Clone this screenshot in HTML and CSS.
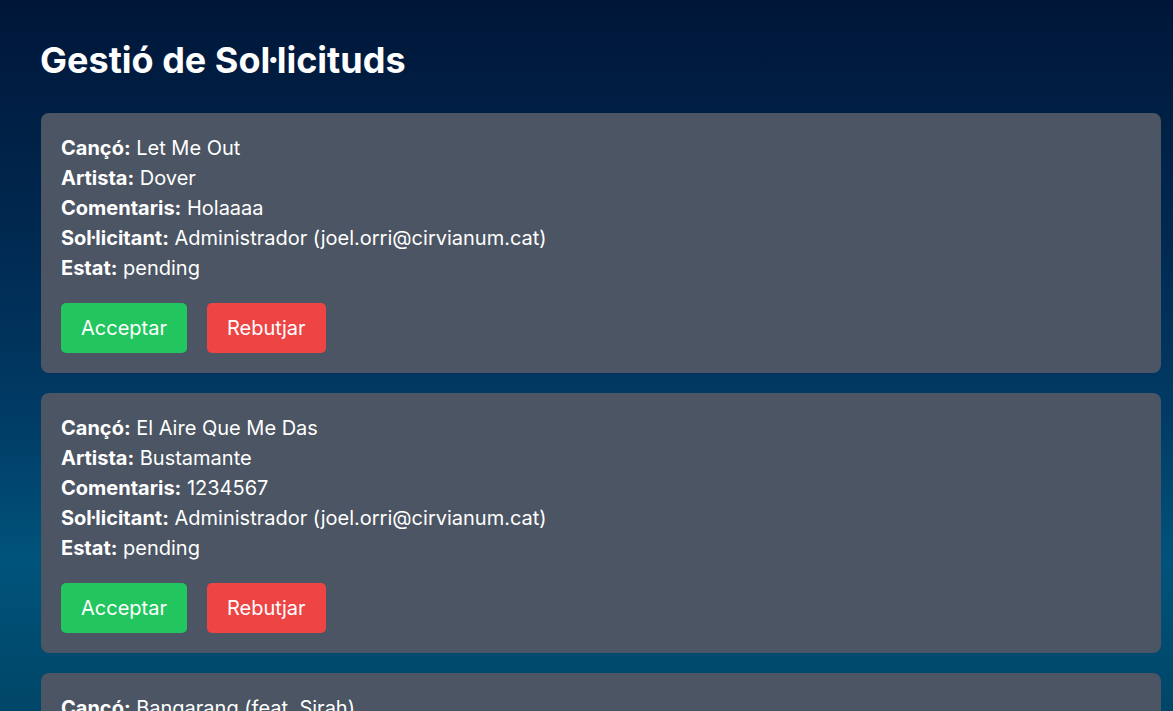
FILE: index.html
```html
<!DOCTYPE html>
<html lang="ca">
<head>
<meta charset="utf-8">
<title>Gestió de Sol·licituds</title>
<link rel="stylesheet" href="styles.css">
</head>
<body>
<main class="page">
  <h1 class="title">Gestió de Sol·licituds</h1>
  <div class="list">
    <section class="card">
      <p><strong>Cançó:</strong> Let Me Out</p>
      <p><strong>Artista:</strong> Dover</p>
      <p><strong>Comentaris:</strong> Holaaaa</p>
      <p><strong>Sol·licitant:</strong> Administrador (joel.orri@cirvianum.cat)</p>
      <p><strong>Estat:</strong> pending</p>
      <div class="actions">
        <button class="btn accept">Acceptar</button>
        <button class="btn reject">Rebutjar</button>
      </div>
    </section>
    <section class="card">
      <p><strong>Cançó:</strong> El Aire Que Me Das</p>
      <p><strong>Artista:</strong> Bustamante</p>
      <p><strong>Comentaris:</strong> 1234567</p>
      <p><strong>Sol·licitant:</strong> Administrador (joel.orri@cirvianum.cat)</p>
      <p><strong>Estat:</strong> pending</p>
      <div class="actions">
        <button class="btn accept">Acceptar</button>
        <button class="btn reject">Rebutjar</button>
      </div>
    </section>
    <section class="card">
      <p><strong>Cançó:</strong> Bangarang (feat. Sirah)</p>
      <p><strong>Artista:</strong> Skrillex</p>
      <p><strong>Comentaris:</strong> -</p>
      <p><strong>Sol·licitant:</strong> Administrador (joel.orri@cirvianum.cat)</p>
      <p><strong>Estat:</strong> pending</p>
      <div class="actions">
        <button class="btn accept">Acceptar</button>
        <button class="btn reject">Rebutjar</button>
      </div>
    </section>
  </div>
</main>
</body>
</html>
```
FILE: styles.css
```css
html, body {
  margin: 0;
  padding: 0;
}
body {
  min-height: 100vh;
  font-family: Inter, "Noto Sans", sans-serif;
  color: #ffffff;
  background: linear-gradient(to bottom, #001638 0px, #002a52 250px, #003c66 420px, #00537b 560px, #004668 711px, #003a58 900px);
  background-attachment: fixed;
}
.page {
  padding: 40px 0 40px 40px;
}
.title {
  margin: 0 0 33px 0;
  font-size: 36px;
  line-height: 40px;
  font-weight: 700;
}
.list {
  display: flex;
  flex-direction: column;
  gap: 20px;
  width: 1120px;
  margin-left: 1px;
}
.card {
  background: #4b5563;
  border-radius: 8px;
  padding: 20px;
}
.card p {
  margin: 0;
  font-size: 20px;
  line-height: 30px;
}
.card strong {
  font-weight: 700;
}
.actions {
  display: flex;
  gap: 20px;
  margin-top: 20px;
}
.btn {
  font-family: Inter, "Noto Sans", sans-serif;
  font-size: 20px;
  line-height: 30px;
  color: #ffffff;
  border: none;
  border-radius: 5px;
  padding: 10px 20px;
  cursor: pointer;
}
.accept {
  background: #22c55e;
}
.reject {
  background: #ef4444;
}
```
